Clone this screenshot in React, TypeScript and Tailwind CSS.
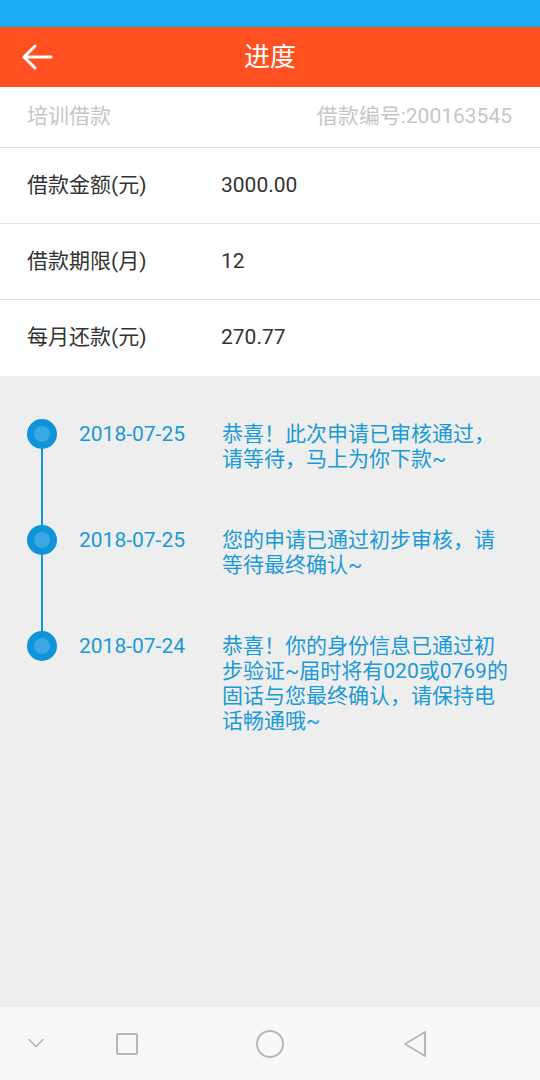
import React from "react";

const rows = [
  { label: "借款金额(元)", value: "3000.00" },
  { label: "借款期限(月)", value: "12" },
  { label: "每月还款(元)", value: "270.77" },
];

const steps = [
  {
    date: "2018-07-25",
    text: "恭喜！此次申请已审核通过，请等待，马上为你下款~",
  },
  {
    date: "2018-07-25",
    text: "您的申请已通过初步审核，请等待最终确认~",
  },
  {
    date: "2018-07-24",
    text: "恭喜！你的身份信息已通过初步验证~届时将有020或0769的固话与您最终确认，请保持电话畅通哦~",
  },
];

export default function App() {
  return (
    <div
      className="w-[540px] h-[1080px] flex flex-col bg-[#eeeeee] overflow-hidden"
      style={{ fontFamily: '"Roboto", "Noto Sans CJK SC", sans-serif' }}
    >
      {/* status bar */}
      <div className="h-[27px] bg-[#1aabf3] shrink-0" />

      {/* header */}
      <div className="h-[60px] bg-[#ff5022] shrink-0 flex items-center relative">
        <svg
          className="absolute left-[21px] top-[15px]"
          width="32"
          height="30"
          viewBox="0 0 32 30"
          fill="none"
          stroke="white"
          strokeWidth="3"
          strokeLinecap="round"
          strokeLinejoin="round"
        >
          <path d="M30 15H3M14 4L3 15l11 11" />
        </svg>
        <div className="flex-1 text-center text-white text-[26px] leading-none">进度</div>
      </div>

      {/* info */}
      <div className="bg-white shrink-0">
        <div className="h-[61px] flex items-center justify-between pl-[27px] pr-[28px] border-b border-[#e2e2e2] text-[21px] text-[#c6c6c6]">
          <span>培训借款</span>
          <span>借款编号:200163545</span>
        </div>
        {rows.map((r, i) => (
          <div
            key={r.label}
            className={`h-[76px] flex items-center pl-[27px] text-[21px] text-[#333333] ${
              i < rows.length - 1 ? "border-b border-[#e2e2e2]" : ""
            }`}
          >
            <span className="w-[194px]">{r.label}</span>
            <span>{r.value}</span>
          </div>
        ))}
      </div>

      {/* timeline */}
      <div className="flex-1 pt-[46px]">
        {steps.map((s, i) => (
          <div key={i} className="flex relative">
            {i < steps.length - 1 && (
              <div className="absolute left-[41px] top-[12px] bottom-[-12px] w-[2px] bg-[#1296db]" />
            )}
            <div className="w-[79px] shrink-0 relative">
              <div className="absolute left-[27px] top-[-3px] w-[30px] h-[30px] rounded-full bg-[#0f93d9] flex items-center justify-center">
                <div className="w-[16px] h-[16px] rounded-full bg-[#3ba7e4]" />
              </div>
            </div>
            <div className="w-[143px] shrink-0 text-[21px] leading-[25px] text-[#1a9ad6]">{s.date}</div>
            <div className="w-[286px] text-[21px] leading-[25px] text-[#1a9ad6] pb-[56px]">{s.text}</div>
          </div>
        ))}
      </div>

      {/* nav bar */}
      <div className="h-[73px] bg-[#f8f8f8] shrink-0 relative">
        <svg className="absolute left-[27px] top-[30px]" width="18" height="12" viewBox="0 0 18 12" fill="none" stroke="#b4b4b4" strokeWidth="1.5">
          <path d="M1.5 2l7.5 7.5L16.5 2" />
        </svg>
        <div className="absolute left-[116px] top-[26px] w-[22px] h-[22px] border-2 border-[#b8b8b8] rounded-[2px]" />
        <div className="absolute left-[256px] top-[23px] w-[28px] h-[28px] border-2 border-[#b8b8b8] rounded-full" />
        <svg className="absolute left-[403px] top-[23px]" width="24" height="28" viewBox="0 0 24 28" fill="none" stroke="#b8b8b8" strokeWidth="2" strokeLinejoin="round">
          <path d="M22 2v24L2 14z" />
        </svg>
      </div>
    </div>
  );
}
